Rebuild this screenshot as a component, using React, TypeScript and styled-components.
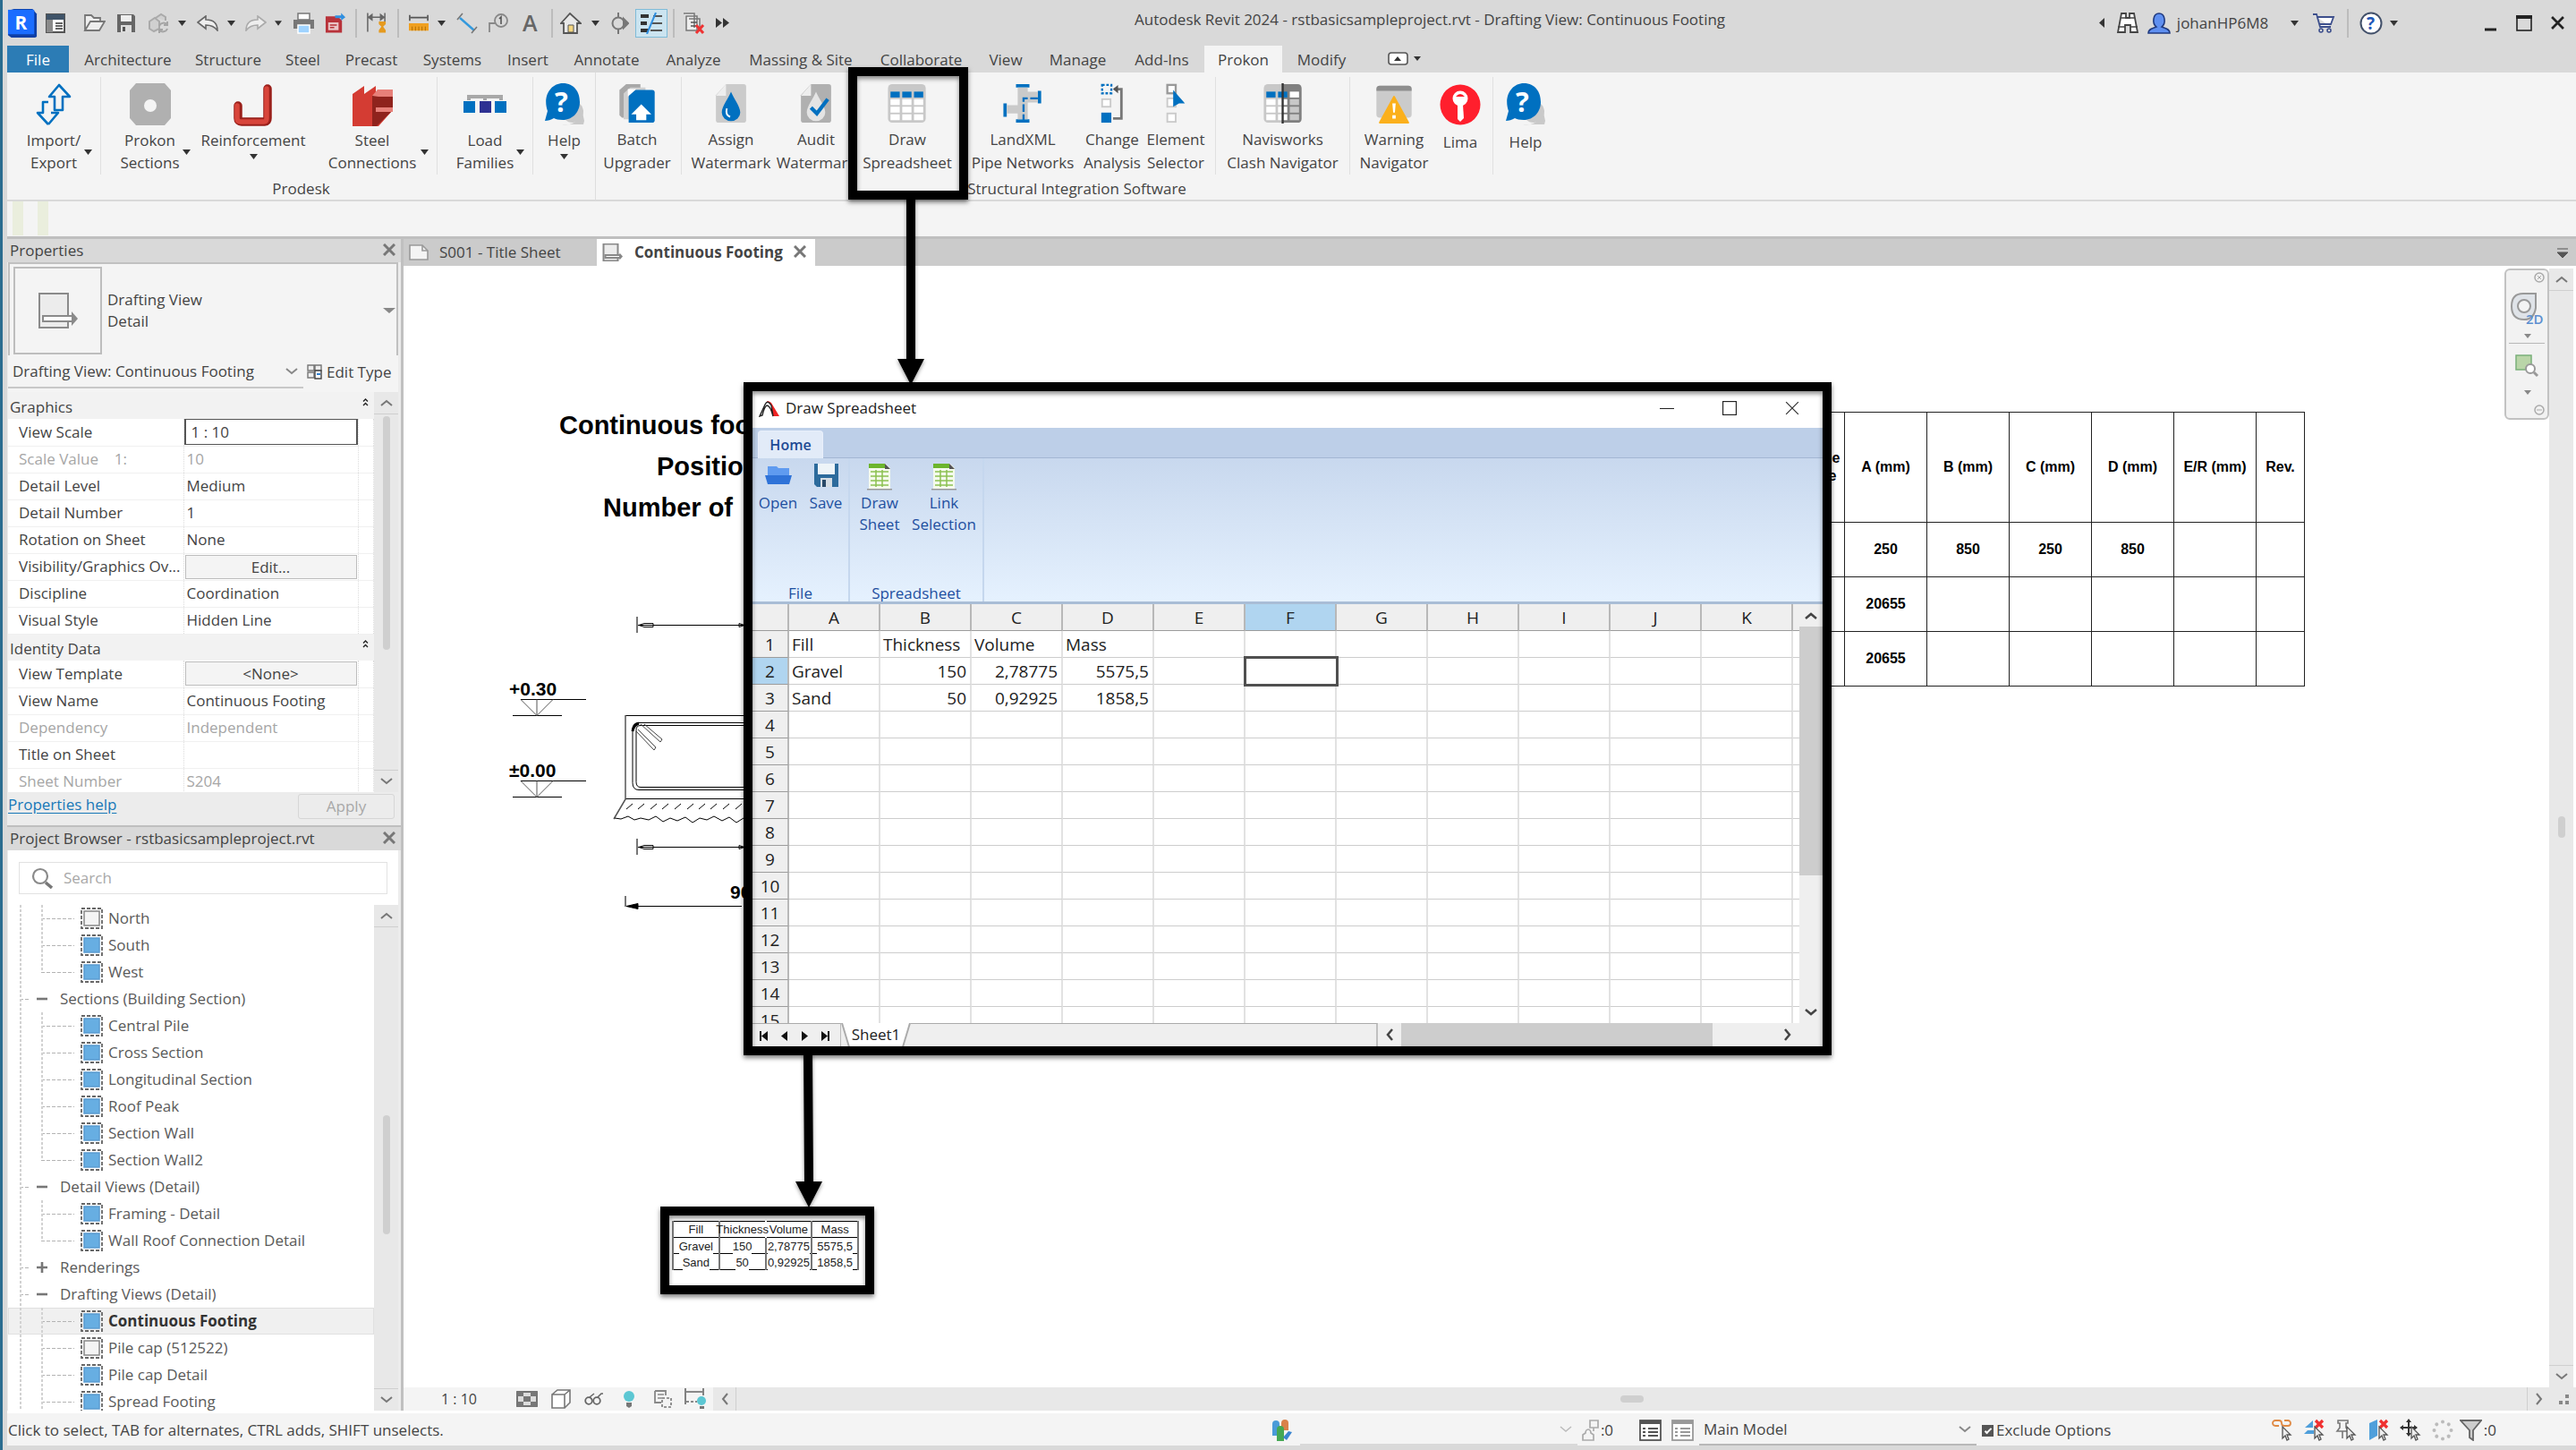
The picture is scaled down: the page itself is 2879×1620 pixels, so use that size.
import React from "react";
import styled, { createGlobalStyle, css } from "styled-components";

const ui = `"Open Sans", "Noto Sans", sans-serif`;
const drafting = `"Liberation Sans", Arial, sans-serif`;

const GlobalStyle = createGlobalStyle`
  *, *::before, *::after { box-sizing: border-box; }
  body { margin: 0; background: #d9d9d9; }
  button, input, select { font: inherit; color: inherit; margin: 0; }
  button { border: 0; padding: 0; background: none; }
`;

const Page = styled.div`
  position: relative;
  height: 100vh;
  display: flex;
  flex-direction: column;
  overflow: hidden;
  background: #d9d9d9;
  border-left: 3px solid #2b6c8f;
  padding-left: 5px;
  color: #444;
  font: 17px/24px ${ui};
`;
const Col = styled.col<{ $w?: number }>`
  width: ${(p) => (p.$w ? `${p.$w}px` : "auto")};
`;

/* ---------- title bar ---------- */
const TitleBar = styled.header`
  height: 51px;
  display: grid;
  grid-template-columns: 1260px 1fr auto;
  align-items: center;
`;
const ToolRow = styled.div`
  display: flex;
  align-items: center;
  height: 51px;
`;
const Slot = styled.button<{ $w: number }>`
  width: ${(p) => p.$w}px;
  height: 34px;
  display: flex;
  align-items: center;
  justify-content: center;
  flex: none;
`;
const Gap = styled.span<{ $w: number }>`
  width: ${(p) => p.$w}px;
  flex: none;
`;
const Rule = styled.span<{ $w: number }>`
  width: ${(p) => p.$w}px;
  height: 32px;
  flex: none;
  background: linear-gradient(#bcbcbc, #bcbcbc) center / 2px 100% no-repeat;
`;
const ActiveTool = styled.span`
  width: 36px;
  height: 32px;
  display: flex;
  align-items: center;
  justify-content: center;
  background: #cbe4f0;
  border: 1px solid #7fbbd8;
`;
const WindowTitle = styled.div`
  padding-bottom: 7px;
  white-space: nowrap;
`;

/* ---------- ribbon ---------- */
const TabBar = styled.nav`
  height: 30px;
  display: flex;
`;
const RibbonTab = styled.button<{ $w: number; $kind?: "file" | "active" }>`
  width: ${(p) => p.$w}px;
  padding-top: 2px;
  line-height: 28px;
  white-space: nowrap;
  ${(p) => p.$kind === "file" && css`background: #2c7cb5; color: #fff; margin-right: 4px;`}
  ${(p) => p.$kind === "active" && css`background: #f4f4f4;`}
`;
const Ribbon = styled.section`
  height: 144px;
  display: flex;
  background: #f4f4f4;
  border-bottom: 2px solid #d9d9d9;
`;
const RibbonGroup = styled.div`
  display: flex;
  flex-direction: column;
  border-right: 1px solid #dedede;
  &:last-child { border-right: 0; }
`;
const GroupTools = styled.div`
  display: flex;
  height: 118px;
  padding-top: 5px;
`;
const GroupTitle = styled.div`
  text-align: center;
  line-height: 24px;
`;
const Divider = styled.span<{ $w: number }>`
  width: ${(p) => p.$w}px;
  height: 109px;
  border-right: 1px solid #e0e0e0;
`;
const Big = styled.button<{ $w: number; $drop?: boolean }>`
  position: relative;
  width: ${(p) => p.$w}px;
  height: 109px;
  display: flex;
  flex-direction: column;
  align-items: center;
  gap: ${(p) => (p.$drop ? 3 : 5)}px;
  padding-top: 7px;
  line-height: ${(p) => (p.$drop ? 25 : 26)}px;
  white-space: nowrap;
`;
const SideCaret = styled.span`
  position: absolute;
  right: 9px;
  bottom: 22px;
  line-height: 0;
`;
const OptionsBar = styled.div`
  height: 42px;
  background: #f4f4f4;
  border-bottom: 3px solid #bfbfbf;
  display: flex;
  gap: 16px;
  padding-left: 6px;
`;
const Grip = styled.span`
  width: 12px;
  height: 38px;
  background: #eaeedd;
`;

/* ---------- dock ---------- */
const Work = styled.div`
  flex: 1;
  min-height: 0;
  display: flex;
`;
const Dock = styled.aside`
  width: 443px;
  flex: none;
  display: flex;
  flex-direction: column;
  border-right: 3px solid #c0c0c0;
  padding: 0 3px 0 1px;
  background: #ececec;
`;
const PanelTitle = styled.div`
  height: 26px;
  margin: 0 -3px 0 -1px;
  padding: 0 6px 0 3px;
  background: #d9d9d9;
  display: flex;
  align-items: center;
  justify-content: space-between;
`;
const TypeSelector = styled.div`
  height: 104px;
  border: 2px solid #c0c0c0;
  border-bottom: 0;
  background: #f4f4f4;
  display: flex;
  align-items: center;
  padding: 2px 1px 0 4px;
  gap: 6px;
`;
const Preview = styled.div`
  width: 99px;
  height: 98px;
  border: 2px solid #bdbdbd;
  display: flex;
  align-items: center;
  justify-content: center;
`;
const TypeName = styled.div`
  flex: 1;
`;
const InstanceBar = styled.div`
  height: 41px;
  display: flex;
  gap: 4px;
  background: #f4f4f4;
  padding-bottom: 4px;
`;
const ComboWrap = styled.label<{ $w: number; $line: string }>`
  position: relative;
  width: ${(p) => p.$w}px;
  display: flex;
  align-items: center;
  border-bottom: 2px solid ${(p) => p.$line};
  svg { position: absolute; right: 6px; pointer-events: none; }
`;
const Combo = styled.select`
  appearance: none;
  border: 0;
  background: transparent;
  width: 100%;
  padding: 0 0 0 5px;
`;
const EditType = styled.button`
  display: flex;
  align-items: center;
  gap: 5px;
  white-space: nowrap;
`;
const PropertyArea = styled.div`
  display: flex;
  height: 447px;
  flex: none;
  overflow: hidden;
`;
const PropTable = styled.table`
  width: 409px;
  border-collapse: collapse;
  table-layout: fixed;
  background: #fff;
  th, td { height: 30px; padding: 0; text-align: left; font-weight: 400; line-height: 26px; }
`;
const SectionRow = styled.tr`
  background: #f2f2f2;
  th { padding: 3px 6px 0 2px; }
  svg { float: right; margin-top: 2px; }
`;
const PropRow = styled.tr<{ $off?: boolean }>`
  border-bottom: 1px solid #f0f0f0;
  color: ${(p) => (p.$off ? "#a6a6a6" : "#444")};
  && th { padding-left: 12px; border-right: 1px dotted #dcdcdc; white-space: pre; overflow: hidden; text-overflow: ellipsis; }
  && td { padding-left: 3px; border-right: 1px dotted #dcdcdc; }
`;
const ScaleInput = styled.input`
  display: block;
  width: 194px;
  height: 29px;
  margin-left: -3px;
  border: 2px solid #555;
  border-width: 1px 2px;
  background: #fff;
  padding: 0 6px;
`;
const CellButton = styled.button`
  display: block;
  width: 192px;
  height: 27px;
  margin-left: -2px;
  border: 1px solid #bdbdbd;
  background: #f4f4f4;
  line-height: 25px;
`;
const Scroll = styled.div`
  width: 27px;
  margin-left: auto;
  background: #e8e8e8;
  display: flex;
  flex-direction: column;
  align-items: center;
`;
const ScrollEnd = styled.button<{ $at: "top" | "bottom" }>`
  width: 100%;
  height: 25px;
  display: flex;
  align-items: center;
  justify-content: center;
  flex: none;
  ${(p) => (p.$at === "top" ? "border-bottom: 1px solid #cfcfcf;" : "border-top: 1px solid #cfcfcf; margin-top: auto;")}
`;
const Thumb = styled.span<{ $before: number; $size: number }>`
  width: 8px;
  height: ${(p) => p.$size}px;
  margin-top: ${(p) => p.$before}px;
  border-radius: 4px;
  background: #cfcfcf;
`;
const PropFooter = styled.div`
  height: 39px;
  flex: none;
  display: flex;
  align-items: flex-start;
  justify-content: space-between;
  padding: 2px 4px 0 1px;
  border-bottom: 2px solid #bfbfbf;
  margin: 0 -3px 0 -1px;
  a { color: #1878b8; text-decoration: underline; text-underline-offset: 3px; }
`;
const Apply = styled.button`
  width: 108px;
  height: 28px;
  border: 1px solid #d6d6d6;
  border-radius: 3px;
  color: #a8a8a8;
  margin-right: 3px;
`;
const Browser = styled.div`
  flex: 1;
  min-height: 0;
  background: #fff;
  display: flex;
  flex-direction: column;
`;
const SearchBox = styled.label`
  height: 36px;
  margin: 13px 12px 12px;
  border: 1px solid #e2e2e2;
  display: flex;
  align-items: center;
  gap: 12px;
  padding-left: 13px;
  flex: none;
  input { border: 0; outline: 0; background: none; flex: 1; padding: 0; }
  input::placeholder { color: #a8a8a8; opacity: 1; }
`;
const TreeArea = styled.div`
  flex: 1;
  min-height: 0;
  display: flex;
  overflow: hidden;
`;
const Tree = styled.ul`
  list-style: none;
  margin: 0;
  padding: 0;
  width: 409px;
`;
const TreeRow = styled.li<{ $sel?: boolean }>`
  height: 30px;
  display: flex;
  align-items: center;
  padding-left: 13px;
  color: ${(p) => (p.$sel ? "#333" : "#5a5a5a")};
  font-weight: ${(p) => (p.$sel ? 700 : 400)};
  background: ${(p) => (p.$sel ? "#f0f0f0" : "transparent")};
  box-shadow: ${(p) => (p.$sel ? "inset 0 0 0 1px #e0e0e0" : "none")};
`;
const dots = "repeating-linear-gradient(#d2d2d2 0 3px, transparent 3px 5px)";
const dashes = "repeating-linear-gradient(90deg, #b4b4b4 0 4px, transparent 4px 6px)";
const Guide = styled.span<{ $w: number; $arm?: number; $stop?: boolean }>`
  width: ${(p) => p.$w}px;
  height: 30px;
  flex: none;
  background:
    ${dots} left top / 2px ${(p) => (p.$stop ? "50%" : "100%")} no-repeat,
    ${dashes} left center / ${(p) => p.$arm || 0}px 1px no-repeat;
`;
const TreeLabel = styled.span<{ $gap: number }>`
  padding-left: ${(p) => p.$gap}px;
  white-space: nowrap;
`;

/* ---------- canvas ---------- */
const Main = styled.main`
  flex: 1;
  min-width: 0;
  display: flex;
  flex-direction: column;
`;
const DocTabs = styled.div`
  height: 30px;
  background: #cbcbcb;
  display: flex;
  align-items: center;
`;
const DocTab = styled.div<{ $active?: boolean }>`
  height: 30px;
  display: flex;
  align-items: center;
  gap: 12px;
  width: ${(p) => (p.$active ? 244 : 216)}px;
  padding-left: 6px;
  background: ${(p) => (p.$active ? "#fff" : "transparent")};
  font-weight: ${(p) => (p.$active ? 700 : 400)};
  white-space: nowrap;
`;
const TabOptions = styled.button`
  margin-left: auto;
  padding-right: 9px;
  line-height: 0;
`;
const Canvas = styled.div`
  position: relative;
  flex: 1;
  min-height: 0;
  background: #fff;
  display: flex;
  justify-content: flex-end;
  padding: 3px 3px 0 0;
`;
const Drawing = styled.svg`
  position: absolute;
  left: 1px;
  top: 0;
`;
const Schedule = styled.table`
  position: absolute;
  left: 1552px;
  top: 163px;
  border-collapse: collapse;
  table-layout: fixed;
  width: 573px;
  color: #000;
  font: 700 16px/20px ${drafting};
  th, td { border: 1px solid #222; padding: 0; text-align: center; height: 61px; }
  thead th { height: 123px; }
`;
const NavBar = styled.div`
  width: 50px;
  height: 169px;
  border: 2px solid #c2c2c2;
  border-radius: 6px;
  background: #f2f2f2;
  display: flex;
  flex-direction: column;
  align-items: center;
  color: #999;
`;
const VScroll = styled(Scroll)`
  margin-left: 0;
`;
const ViewBar = styled.div`
  height: 26px;
  display: flex;
  align-items: center;
  background: #e8e8e8;
  font-size: 16px;
`;
const ViewTools = styled.div`
  width: 346px;
  height: 26px;
  display: flex;
  align-items: center;
  background: #f4f4f4;
  padding-left: 42px;
`;
const ScaleButton = styled.button`
  width: 64px;
  text-align: left;
`;
const HTrack = styled.div`
  flex: 1;
  height: 26px;
  border-left: 1px solid #cfcfcf;
  border-right: 1px solid #cfcfcf;
  display: flex;
  align-items: center;
  justify-content: center;
`;
const HThumb = styled.span`
  width: 26px;
  height: 8px;
  border-radius: 4px;
  background: #cfcfcf;
`;

/* ---------- status bar ---------- */
const Status = styled.footer`
  height: 44px;
  border-top: 3px solid #fff;
  border-bottom: 5px solid #d9d9d9;
  background: #f4f4f4;
  display: flex;
  align-items: center;
  padding: 2px 89px 0 0;
`;
const Hint = styled.span`
  width: 1409px;
  padding-left: 1px;
`;
const StatusCombo = styled(ComboWrap)`
  height: 34px;
`;
const Exclude = styled.label`
  display: flex;
  align-items: center;
  gap: 3px;
  padding-left: 6px;
  white-space: nowrap;
  input { appearance: none; margin: 0; width: 13px; height: 13px; background: #555; display: grid; place-items: center; }
  input:checked::after { content: ""; width: 8px; height: 4px; border: solid #fff; border-width: 0 0 2px 2px; transform: rotate(-45deg); }
`;
const StatusTools = styled.div`
  margin-left: auto;
  display: flex;
  align-items: center;
`;

/* ---------- callouts ---------- */
const Frame = styled.div<{ $x: number; $y: number; $w: number; $h: number }>`
  position: absolute;
  left: ${(p) => p.$x}px;
  top: ${(p) => p.$y}px;
  width: ${(p) => p.$w}px;
  height: ${(p) => p.$h}px;
  border: 10px solid #000;
  box-shadow: 0 3px 5px rgba(0, 0, 0, 0.5);
  &::after {
    content: "";
    position: absolute;
    inset: 0;
    box-shadow: inset 0 3px 5px rgba(0, 0, 0, 0.45);
    pointer-events: none;
  }
`;
const Arrow = styled.svg<{ $x: number; $y: number }>`
  position: absolute;
  left: ${(p) => p.$x}px;
  top: ${(p) => p.$y}px;
  filter: drop-shadow(0 2px 2px rgba(0, 0, 0, 0.4));
`;
const Window = styled.div`
  height: 100%;
  display: flex;
  flex-direction: column;
  background: #fff;
  color: #1e4fa0;
`;
const WinTitle = styled.div`
  height: 41px;
  display: flex;
  align-items: center;
  padding: 0 26px 3px 7px;
  gap: 6px;
  color: #222;
  span { flex: 1; }
`;
const WinButtons = styled.div`
  display: flex;
  gap: 54px;
  button { width: 16px; line-height: 0; }
`;
const WinTabs = styled.div`
  height: 34px;
  background: #bdcfe8;
  border-bottom: 1px solid #a3b6d3;
  padding: 3px 0 0 6px;
`;
const WinTab = styled.button`
  width: 73px;
  height: 31px;
  background: #e2ebf8;
  border: 1px solid #e8effa;
  border-bottom: 0;
  border-radius: 4px 4px 0 0;
  color: #1e4a94;
  font-weight: 600;
  font-size: 16px;
`;
const WinRibbon = styled.div`
  height: 163px;
  background: linear-gradient(#c8d8ee, #e5f1fe 158px);
  border-bottom: 3px solid #a9bdd6;
  display: flex;
  overflow: hidden;
`;
const WinGroup = styled.div<{ $w: number }>`
  width: ${(p) => p.$w}px;
  border-right: 2px solid #c5d7ee;
  display: flex;
  flex-direction: column;
  justify-content: space-between;
  text-align: center;
`;
const WinTools = styled.div`
  display: flex;
  line-height: 24px;
`;
const WinTool = styled.button<{ $w: number }>`
  width: ${(p) => p.$w}px;
  padding-top: 6px;
  display: flex;
  flex-direction: column;
  align-items: center;
  gap: 2px;
`;
const WinGroupTitle = styled.div`
  height: 22px;
  line-height: 26px;
  overflow: hidden;
`;
const SheetArea = styled.div`
  flex: 1;
  min-height: 0;
  display: flex;
  overflow: hidden;
  color: #222;
`;
const Sheet = styled.table`
  border-collapse: separate;
  border-spacing: 0;
  table-layout: fixed;
  width: 1170px;
  font-size: 19px;
  line-height: 28px;
  td, th { height: 30px; padding: 0 4px 0 3px; font-weight: 400; border-right: 2px solid #e2e2e2; border-bottom: 1px solid #cdcdcd; white-space: nowrap; overflow: hidden; }
  tr > *:last-child { border-right: 0; }
`;
const HeadCell = styled.th<{ $hot?: boolean }>`
  && {
    padding: 0;
    text-align: center;
    background: ${(p) => (p.$hot ? "#b0d5f0" : "#efefef")};
    border-color: #b8b8b8;
    border-bottom-color: #9c9c9c;
  }
`;
const Cell = styled.td<{ $num?: boolean; $cursor?: boolean }>`
  text-align: ${(p) => (p.$num ? "right" : "left")};
  ${(p) => p.$cursor && css`&& { outline: 3px solid #505050; outline-offset: -1px; border-color: transparent; }`}
`;
const SheetScroll = styled.div`
  width: 26px;
  background: #efefef;
  display: flex;
  flex-direction: column;
`;
const SheetScrollButton = styled.button`
  height: 25px;
  display: grid;
  place-items: center;
`;
const SheetThumb = styled.span`
  height: 278px;
  background: #cdcdcd;
  margin-bottom: auto;
`;
const SheetFooter = styled.div`
  height: 26px;
  background: #efefef;
  display: flex;
  align-items: stretch;
  color: #222;
`;
const SheetNav = styled.div`
  width: 99px;
  display: flex;
  justify-content: space-around;
  padding-right: 4px;
  border-top: 1px solid #aaa;
  border-right: 1px solid #bbb;
`;
const SheetTab = styled.button`
  width: 78px;
  background: #aaa;
  clip-path: polygon(0 0, 100% 0, 90% 100%, 10% 100%);
  span {
    display: block;
    height: 26px;
    line-height: 26px;
    background: #fff;
    clip-path: polygon(2px 0, calc(100% - 2px) 0, calc(90% - 2px) 100%, calc(10% + 2px) 100%);
  }
`;
const FooterFill = styled.div`
  flex: 1;
  border-top: 1px solid #aaa;
  border-right: 2px solid #c0c0c0;
`;
const SheetHScroll = styled.div`
  width: 497px;
  display: flex;
  padding-right: 26px;
  button { width: 26px; display: grid; place-items: center; }
  span { width: 348px; background: #cdcdcd; margin-right: auto; }
`;
const Placed = styled.div`
  height: 100%;
  background: #fff;
  padding: 6px 0 0 3px;
`;
const PlacedTable = styled.table`
  border-collapse: collapse;
  table-layout: fixed;
  width: 209px;
  color: #222;
  font: 13px/17px ${drafting};
  th, td { padding: 0; height: 18px; border: 2px solid #777; border-top: 1px solid #000; border-bottom: 1px solid #000; font-weight: 400; white-space: nowrap; text-align: center; }
  th:nth-child(2) { border-left-color: transparent; border-right-color: transparent; }
  td span, th span { display: flex; justify-content: center; margin: 0 -6px; }
  td b { font-weight: 400; background: #fff; margin-bottom: -2px; position: relative; }
`;

/* ---------- drawings ---------- */
const S = ({ w, h, v, children }: { w: number; h: number; v?: string; children: React.ReactNode }) => (
  <svg width={w} height={h} viewBox={v || `0 0 ${w} ${h}`} fill="none" aria-hidden="true">{children}</svg>
);
const Caret = () => <S w={9} h={6}><path d="M0 0h9L4.5 6z" fill="#333" /></S>;
const Chev = ({ d, c = "#777", s = 2 }: { d: "u" | "d" | "l" | "r"; c?: string; s?: number }) => (
  <S w={14} h={14}>
    <path stroke={c} strokeWidth={s} d={{ u: "M1 10l6-5 6 5", d: "M1 4l6 5 6-5", l: "M10 1L5 7l5 6", r: "M4 1l5 6-5 6" }[d]} />
  </S>
);
const Cross = ({ s = 14, c = "#777", k = 3 }: { s?: number; c?: string; k?: number }) => (
  <S w={s} h={s} v="0 0 14 14"><path stroke={c} strokeWidth={k} d="M1 1l12 12M13 1L1 13" /></S>
);
const RLogo = () => (
  <S w={36} h={34}>
    <path d="M2 2l6-2h22l5 6v27l-2 1H5l-4-3z" fill="#0d3fa6" /><rect x="1" y="1" width="31" height="29" fill="#1a6dff" />
    <text x="9" y="24" fontFamily="Open Sans" fontWeight="700" fontSize="22" fill="#fff">R</text>
  </S>
);
const HomeIcon = () => (
  <S w={22} h={22}><rect x="1" y="1" width="20" height="20" stroke="#555" strokeWidth="2" fill="#fff" /><path d="M1 1h20v6H1z" fill="#3f5368" /><path d="M1 7h7v14H1z" fill="#8a8a8a" /><path d="M11 11h8M11 14h8M11 17h8" stroke="#333" strokeWidth="1.5" /></S>
);
const Folder = () => <S w={25} h={22}><path d="M2 19V2h7l3 3h7v4M2 19l6-10h16l-6 10z" stroke="#777" strokeWidth="1.8" fill="#eee" /></S>;
const Disk = () => <S w={22} h={22}><path d="M1 1h18l2 2v18H1z" fill="#666" /><path d="M5 2h12v7H5z" fill="#eee" /><path d="M5 13h12v8H5z" fill="#ddd" /><path d="M7 15h3v5H7z" fill="#555" /></S>;
const Sync = () => <S w={25} h={24}><path d="M2 10l6-4 5 4v8l-6 3-5-3zM9 6l6-4 5 3v4" stroke="#aaa" strokeWidth="2" fill="#d0d0d0" /><path d="M13 15a5 5 0 019-1M22 18a5 5 0 01-9 1M22 10v4h-4M13 23v-4h4" stroke="#a5a5a5" strokeWidth="2" /></S>;
const Undo = ({ c = "#666", flip = false }: { c?: string; flip?: boolean }) => (
  <S w={25} h={18}><path transform={flip ? "matrix(-1 0 0 1 25 0)" : undefined} d="M1 8l9-7v4c8 0 13 4 13 12-3-4-6-6-13-6v4z" stroke={c} strokeWidth="1.6" fill="#eee" /></S>
);
const Printer = () => <S w={25} h={24}><path d="M6 1h13v7H6z" fill="#fff" stroke="#777" strokeWidth="1.5" /><path d="M1 8h23v10H1z" fill="#777" /><path d="M6 14h13v9H6z" fill="#9fd3ff" stroke="#fff" strokeWidth="1.5" /></S>;
const Pdf = () => <S w={25} h={24}><path d="M1 4h14l5 5v14H1z" fill="#b8323a" /><path d="M4 11h12v9H4z" fill="#eac5c7" /><path d="M6 14h8M6 17h5" stroke="#b8323a" strokeWidth="1.5" /><path d="M12 6V3h7V0l5 5-5 4V6z" fill="#2f8fe0" /></S>;
const Measure = () => <S w={25} h={24}><path d="M2 0v22M22 0v10M3 5h18M3 5l4-3v6zM21 5l-4-3v6z" stroke="#666" strokeWidth="1.6" fill="#666" /><path d="M15 10h8v3l-3 3 3 4v3h-8v-3l3-4-3-3z" fill="#e59a1f" /></S>;
const Ruler = () => <S w={24} h={20}><path d="M1 0v7M23 0v7M2 3h20" stroke="#555" strokeWidth="1.8" /><path d="M0 10h24v9H0z" fill="#f0a020" /><path d="M4 14v5M8 14v5M12 14v5M16 14v5M20 14v5" stroke="#a86a00" /></S>;
const Aligned = () => <S w={24} h={24}><path d="M4 6l16 14" stroke="#3399dd" strokeWidth="2.4" /><path d="M1 8l6-7M17 23l6-7" stroke="#777" strokeWidth="1.6" /></S>;
const Tag = () => <S w={22} h={22}><circle cx="14" cy="8" r="7" stroke="#888" strokeWidth="1.8" /><path d="M12 6l2-2v8" stroke="#555" strokeWidth="1.6" /><path d="M7 11H1v10" stroke="#888" strokeWidth="1.8" /></S>;
const LetterA = () => <S w={28} h={34}><text x="5" y="26" fontFamily="Open Sans" fontWeight="600" fontSize="25" fill="#666">A</text></S>;
const House = () => <S w={24} h={24}><path d="M1 12L11 1l12 11h-4v11H4V12z" fill="#e8e8e8" stroke="#555" strokeWidth="1.8" /><path d="M9 14h6v8H9z" fill="#f4d680" stroke="#555" /></S>;
const Section = () => <S w={22} h={24}><circle cx="10" cy="12" r="6.5" stroke="#777" strokeWidth="2" /><path d="M10 0v6M10 18v6M16 7l5 5-5 5z" stroke="#777" strokeWidth="2" fill="#777" /></S>;
const ThinLines = () => <S w={26} h={24}><path d="M1 4h9M1 12h7M1 20h9" stroke="#333" strokeWidth="4" /><path d="M15 4h10M13 12h12M12 20h13" stroke="#555" strokeWidth="1.8" /><path d="M18 0L8 24" stroke="#2f8fe0" strokeWidth="2" /></S>;
const CloseViews = () => <S w={25} h={24}><path d="M1 1h12v16M4 4h12v16H4zM7 7h12v13" stroke="#777" strokeWidth="1.5" fill="#eee" /><path d="M9 11h7M9 15h6" stroke="#555" strokeWidth="1.5" /><path d="M15 14l8 9M23 14l-8 9" stroke="#e33" strokeWidth="3" /></S>;
const More = () => <S w={16} h={11}><path d="M0 0l7 5.500L0 11zM8 0l7 5.500L8 11z" fill="#333" /></S>;
const Binoculars = () => <S w={26} h={24}><path d="M6 1h5v5h4V1h5l4 21h-8v-8h-6v8H2z" fill="#fff" stroke="#444" strokeWidth="1.8" /><path d="M2 16h8M16 16h8M6 6h5M15 6h5" stroke="#444" strokeWidth="1.5" /></S>;
const User = () => <S w={26} h={24}><path d="M1 23c0-5 5-5 9-7-5-4-4-15 3-15s8 11 3 15c4 2 9 2 9 7z" fill="#5f8ff0" stroke="#1f3a80" strokeWidth="1.6" /></S>;
const Cart = () => <S w={26} h={24}><path d="M1 2h4l4 14h12M6 5h18l-3 8H8" stroke="#3d4f8c" strokeWidth="1.8" fill="#fff" /><circle cx="10" cy="20" r="2" stroke="#3d4f8c" strokeWidth="1.6" /><circle cx="19" cy="20" r="2" stroke="#3d4f8c" strokeWidth="1.6" /></S>;
const Ask = () => <S w={26} h={26}><circle cx="13" cy="13" r="11.500" fill="#fff" stroke="#42506a" strokeWidth="2" /><text x="8" y="20" fontFamily="Open Sans" fontWeight="700" fontSize="19" fill="#2257b8">?</text></S>;

const ImportExport = () => <S w={42} h={48}><path d="M27 2L16 15h6v15h9V15h8zM15 46L3 33h6V21h6M15 46l11-13h-8" stroke="#0070c0" strokeWidth="2.600" strokeLinejoin="round" /></S>;
const Octagon = () => <S w={48} h={48}><path d="M8 0h32l7 8v31l-7 8H8l-7-8V8z" fill="#b0b0b0" /><circle cx="24" cy="25" r="7" fill="#f4f4f4" /></S>;
const Rebar = () => <S w={46} h={48}><path d="M6 25v14q0 4 4 4h26q3 0 3-4V6" stroke="#9a1f1a" strokeWidth="9.500" strokeLinecap="round" /><path d="M5 25v14q0 4 4 4h26q3 0 3-4V6" stroke="#d8453b" strokeWidth="5.500" strokeLinecap="round" /></S>;
const SteelIcon = () => <S w={46} h={48}><path d="M1 12l13-9v9l13-9v8l19-4v23L30 48H1z" fill="#d43c33" /><path d="M23 14l23-3v19L28 48h-5z" fill="#8f231d" /><path d="M23 14l6-7h17v8H30zM27 27h19v5H27z" fill="#e78079" /></S>;
const Families = () => <S w={48} h={48}><path d="M6 19v-4h36v4M24 15v4" stroke="#a8a8a8" strokeWidth="4" /><path d="M0 20h13v13H0z" fill="#0070c0" /><path d="M18 20h13v13H18z" fill="#2e3192" /><path d="M35 20h13v13H35z" fill="#0070c0" /></S>;
const HelpIcon = () => <S w={46} h={48}><path d="M20 46c14 2 22-6 22-18l3 14-1 4z" fill="#c9c9c9" /><circle cx="32" cy="32" r="12" fill="#c9c9c9" /><path d="M1 42l3-11C-2 14 8 0 21 0s19 10 19 21-8 20-19 20c-5 0-8-1-10-2-3 2-7 3-10 3z" fill="#0070c0" /><text x="12" y="32" fontFamily="Open Sans" fontWeight="700" fontSize="31" fill="#fff">?</text></S>;
const Batch = () => <S w={44} h={48}><path d="M1 8L9 1h17v40H4l-3-3z" fill="#a8a8a8" /><path d="M6 12l8-7h18v38H6z" fill="#d0d0d0" /><path d="M12 14l8-6h20q3 0 3 3v33q0 3-3 3H12z" fill="#0070c0" /><path d="M11 16V7h10z" fill="#fff" /><path d="M27 25l12 12h-6v7H21v-7h-6z" fill="#fff" /></S>;
const Water = ({ audit }: { audit?: boolean }) => (
  <S w={38} h={48}><path d="M1 14L13 1h21q3 0 3 3v40q0 3-3 3H4q-3 0-3-3z" fill={audit ? "#b0b0b0" : "#cbcbcb"} /><path d="M1 15L13 1v14z" fill="#eee" />
    <path d="M19 10c3 8 11 17 11 25a11 10 0 01-22 0c0-8 8-17 11-25z" fill={audit ? "#e4e4e4" : "#0070c0"} />
    {audit ? <path d="M13 29l7 7 13-17" stroke="#0070c0" strokeWidth="4.500" /> : <path d="M14 30q-2 8 4 10" stroke="#fff" strokeWidth="2" />}
  </S>
);
const Grid = ({ half }: { half?: boolean }) => (
  <S w={46} h={48}><rect x="0" y="1" width="45" height="46" rx="5" fill="#c8c8c8" />
    {half && <path d="M23 1h17q5 0 5 5v36q0 5-5 5H23z" fill="#808080" />}
    {[0, 1, 2].map((c) => [0, 1, 2, 3].map((r) => (
      <rect key={`${c}${r}`} x={3 + c * 14} y={10 + r * 9} width="11" height="7" fill={r === 0 && !(half && c === 2) ? "#0070c0" : half && c === 2 && r > 0 ? "#c8c8c8" : "#fff"} />
    )))}
    {half && <path d="M22.500 0v48" stroke="#333" strokeWidth="2.500" />}
  </S>
);
const Pipes = () => <S w={46} h={48}><path d="M15 1h16v4H15zM15 43h16v4H15zM0 24h4v16H0zM41 9h4v15h-4z" fill="#0070c0" /><path d="M17 5h12v5h12v13H29v20H17v-7H4V26h13z" fill="#cacaca" /><path d="M24 46V18h18" stroke="#0070c0" strokeWidth="2.500" strokeDasharray="9 3" /></S>;
const Change = () => <S w={28} h={48}><rect x="2" y="2" width="11" height="10" stroke="#0070c0" strokeWidth="2.500" strokeDasharray="3 2" /><rect x="2" y="19" width="10" height="9" stroke="#cacaca" strokeWidth="2" fill="#fff" /><path d="M1 35h12v12H1z" fill="#0070c0" /><path d="M16 7h9v35H15" stroke="#777" strokeWidth="3" /><path d="M15 7l6-5v10z" fill="#555" /></S>;
const Element = () => <S w={24} h={48}><rect x="2" y="2" width="10" height="10" stroke="#999" strokeWidth="2.500" fill="#fff" /><rect x="2" y="18" width="10" height="10" stroke="#cacaca" strokeWidth="2" fill="#fff" /><rect x="2" y="36" width="10" height="10" stroke="#cacaca" strokeWidth="2" fill="#fff" /><path d="M9 8l14 16-7 0-7 4z" fill="#0070c0" /></S>;
const Warn = () => <S w={44} h={48}><rect x="1" y="3" width="42" height="38" rx="4" fill="#cbcbcb" /><path d="M1 9V7q0-4 4-4h34q4 0 4 4v2z" fill="#8e8e8e" /><path d="M22 16l17 31H5z" fill="#fbb01c" strokeLinejoin="round" stroke="#fbb01c" strokeWidth="2" /><path d="M20 24h4l-1 11h-2zM20 38h4v4h-4z" fill="#fff" /></S>;
const Key = () => <S w={46} h={48}><circle cx="23" cy="24" r="22.500" fill="#ff1f2d" /><circle cx="23" cy="17" r="8.500" fill="#fff" /><path d="M20 24h6l1 15-4 4-3-3z" fill="#fff" /><path d="M18 15q5-6 10 0z" fill="#ff1f2d" /></S>;

const ViewGlyph = ({ w = 46, h = 40, c = "#8a8a8a", k = 2 }: { w?: number; h?: number; c?: string; k?: number }) => (
  <S w={w} h={h} v="0 0 46 40"><path d="M2 1h32v38H2z" stroke={c} strokeWidth={k} fill="#ececec" /><path d="M6 26h33v6H6z" fill="#fff" stroke={c} strokeWidth={k} /><path d="M38 21l7 8-7 8z" fill={c} /></S>
);
const EditTypeIcon = () => <S w={17} h={17}><path d="M1 1h7v6H1zM9 1h7v6H9zM1 9h7v6H1z" stroke="#777" strokeWidth="1.4" fill="#eee" /><path d="M9 7h7v9H9z" fill="#fff" stroke="#444" strokeWidth="1.4" /><path d="M11 11h4" stroke="#2f7fd0" strokeWidth="2" /></S>;
const Collapse = () => <S w={7} h={10}><path d="M1 4.500L3.500 2 6 4.500M1 9l2.500-2.500L6 9" stroke="#222" strokeWidth="1.400" /></S>;
const Lens = () => <S w={24} h={24}><circle cx="10" cy="10" r="8" stroke="#8a8a8a" strokeWidth="2.200" /><path d="M16 17l7 6" stroke="#777" strokeWidth="3.500" /></S>;
const Leaf = ({ empty }: { empty?: boolean }) => (
  <S w={25} h={24}><rect x="1" y="1" width="23" height="22" stroke="#666" strokeWidth="1.800" strokeDasharray="4 2" /><rect x="4" y="4" width="17" height="16" fill={empty ? "#f4f4f4" : "#67aee2"} stroke={empty ? "#888" : "#5a9bd0"} strokeWidth="1.500" /></S>
);
const Toggle = ({ plus }: { plus?: boolean }) => <S w={12} h={12}><path d={plus ? "M0 6h12M6 0v12" : "M0 6h12"} stroke="#777" strokeWidth="2.600" /></S>;
const Sheetpage = () => <S w={22} h={20}><path d="M1 2h14l6 6v10H1z" stroke="#999" strokeWidth="1.600" fill="#f4f4f4" /><path d="M15 2v6h6" stroke="#999" strokeWidth="1.600" /></S>;

const Cursor = "M0 0v13l3-3 2 5 2-1-2-5h4z";
const Pick = ({ children }: { children: React.ReactNode }) => (
  <S w={24} h={26}>{children}<path d={Cursor} transform="translate(13 9)" fill="#eee" stroke="#555" strokeWidth="1.300" /></S>
);
const RedX = () => <path d="M14 2l8 8M22 2l-8 8" stroke="#f03030" strokeWidth="3.200" />;
const ListIcon = ({ c = "#555" }: { c?: string }) => <S w={25} h={24}><rect x="1" y="1" width="23" height="22" stroke={c} strokeWidth="1.800" fill="#fff" /><path d="M1 1h23v4H1z" fill={c} /><path d="M4 10h3M4 14h3M4 18h3M10 10h11M10 14h11M10 18h11" stroke={c} strokeWidth="1.800" /></S>;
const People = ({ c = "#aaa" }: { c?: string }) => <S w={20} h={24}><path d="M1 23v-6l3-2a3 4 0 116 0l3 2v6zM9 1h9v8H9zM13 9v4" stroke={c} strokeWidth="1.700" /></S>;
const Figures = () => <S w={25} h={25}><path d="M2 5a4 4 0 018 0v13H2z" fill="#4a9bd8" /><path d="M12 4a4 4 0 018 0v8h-8z" fill="#d9814a" /><path d="M7 11a4 4 0 018 0v13H7z" fill="#45a854" /><path d="M14 20l6-7 4 1-6 9z" fill="#3a86d0" /></S>;

const Checker = () => <S w={24} h={18}><rect x="1" y="1" width="22" height="16" fill="#ddd" stroke="#666" strokeWidth="1.800" /><path d="M1 1h7v5H1zM16 1h7v5h-7zM8 6h8v6H8zM1 12h7v5H1zM16 12h7v5h-7z" fill="#777" /></S>;
const Cube = () => <S w={22} h={22}><path d="M1 6h14v15H1zM1 6l6-5h14v14l-6 6M15 6l6-5" stroke="#777" strokeWidth="1.600" fill="#fff" /></S>;
const Glasses = () => <S w={22} h={14}><circle cx="5" cy="9" r="3.800" stroke="#666" strokeWidth="1.800" /><circle cx="14" cy="9" r="3.800" stroke="#666" strokeWidth="1.800" /><path d="M6 5l5-4M15 5l4-4h2" stroke="#666" strokeWidth="1.600" /></S>;
const Bulb = () => <S w={14} h={20}><circle cx="7" cy="7" r="6" fill="#5cc7d3" /><path d="M4 14h6v4l-3 2-3-2z" fill="#777" /></S>;
const Crop = () => <S w={20} h={20}><path d="M1 1h12v5M1 1v13h7" stroke="#888" strokeWidth="1.800" /><path d="M4 5h7M4 9h5" stroke="#888" strokeWidth="1.500" /><path d="M9 9h10v10H9z" stroke="#777" strokeWidth="1.600" strokeDasharray="3 2" /></S>;
const Reveal = () => <S w={26} h={24}><path d="M1 0v18M21 0v8M2 4h18" stroke="#666" strokeWidth="1.600" /><path d="M2 15h12" stroke="#666" strokeWidth="1.600" strokeDasharray="3 2" /><circle cx="19" cy="14" r="5" fill="#5cc7d3" /><path d="M17 20h5v3h-5z" fill="#777" /></S>;

const Prokon = () => <S w={24} h={19}><path d="M9 1q3 0 5 2l9 15h-7L10 3z" fill="#e22" /><path d="M1 18L7 5q3-6 7 1l2 12Q13 6 9 6 6 8 4 17z" fill="#fff" stroke="#222" strokeWidth="1.400" /></S>;
const BlueFolder = () => <S w={30} h={30}><path d="M3 3h10l2 2h12v14H3z" fill="#5f9bf0" /><path d="M0 13h30l-3 10H3z" fill="#2f73d8" /></S>;
const BlueDisk = () => <S w={27} h={30}><path d="M0 0h27v26H3l-3-3z" fill="#2d6b9c" /><path d="M4 0h19v12H4z" fill="#eef4f8" /><path d="M7 16h13v10H7z" fill="#d5dde4" /><path d="M9 18h4v8H9z" fill="#2a4a68" /></S>;
const GreenSheet = () => (
  <S w={28} h={30}><path d="M2 0h19l5 5v23H2z" fill="#f4faec" /><path d="M2 0h18v5H2z" fill="#6cb52d" /><path d="M20 0l6 6h-6z" fill="#555" />
    <path d="M4 9h20M4 14h20M4 19h20M4 24h20M10 7v19M17 7v19" stroke="#8cc152" strokeWidth="1.500" /><path d="M0 28h28v1.500H0z" fill="#999" /></S>
);

const tabs: [string, number][] = [
  ["Architecture", 124], ["Structure", 100], ["Steel", 67], ["Precast", 86], ["Systems", 95], ["Insert", 74], ["Annotate", 102], ["Analyze", 92],
  ["Massing & Site", 148], ["Collaborate", 121], ["View", 68], ["Manage", 93], ["Add-Ins", 95], ["Prokon", 87], ["Modify", 88],
];

type Tool = { l: string[]; i: React.ReactNode; w: number; sep?: number; caret?: "side" | "below" };
const prodesk: Tool[] = [
  { l: ["Import/", "Export"], i: <ImportExport />, w: 104, sep: 1, caret: "side" },
  { l: ["Prokon", "Sections"], i: <Octagon />, w: 109, caret: "side" },
  { l: ["Reinforcement"], i: <Rebar />, w: 122, caret: "below" },
  { l: ["Steel", "Connections"], i: <SteelIcon />, w: 144, sep: 1, caret: "side" },
  { l: ["Load", "Families"], i: <Families />, w: 106, sep: 1, caret: "side" },
  { l: ["Help"], i: <HelpIcon />, w: 69, caret: "below" },
];
const integration: Tool[] = [
  { l: ["Batch", "Upgrader"], i: <Batch />, w: 92, sep: 4 },
  { l: ["Assign", "Watermark"], i: <Water />, w: 110 },
  { l: ["Audit", "Watermark"], i: <Water audit />, w: 80 },
  { l: ["Draw", "Spreadsheet"], i: <Grid />, w: 124 },
  { l: ["LandXML", "Pipe Networks"], i: <Pipes />, w: 134 },
  { l: ["Change", "Analysis"], i: <Change />, w: 66 },
  { l: ["Element", "Selector"], i: <Element />, w: 76, sep: 7 },
  { l: ["Navisworks", "Clash Navigator"], i: <Grid half />, w: 149, sep: 1 },
  { l: ["Warning", "Navigator"], i: <Warn />, w: 98 },
  { l: ["Lima"], i: <Key />, w: 50, sep: 12 },
  { l: ["Help"], i: <HelpIcon />, w: 72 },
];

const Tools = ({ list, drop }: { list: Tool[]; drop?: boolean }) => (
  <GroupTools>
    {list.map((t, n) => (
      <React.Fragment key={n}>
        <Big $w={t.w} $drop={drop}>
          {t.i}
          <span>{t.l.map((x, k) => <React.Fragment key={k}>{k > 0 && <br />}{x}</React.Fragment>)}</span>
          {t.caret === "side" && <SideCaret><Caret /></SideCaret>}
          {t.caret === "below" && <Caret />}
        </Big>
        {t.sep && <Divider $w={t.sep} />}
      </React.Fragment>
    ))}
  </GroupTools>
);

type Prop = { n: string; v?: string; off?: boolean; btn?: boolean; input?: boolean };
const graphics: Prop[] = [
  { n: "View Scale", v: "1 : 10", input: true },
  { n: "Scale Value    1:", v: "10", off: true },
  { n: "Detail Level", v: "Medium" },
  { n: "Detail Number", v: "1" },
  { n: "Rotation on Sheet", v: "None" },
  { n: "Visibility/Graphics Ov...", v: "Edit...", btn: true },
  { n: "Discipline", v: "Coordination" },
  { n: "Visual Style", v: "Hidden Line" },
];
const identity: Prop[] = [
  { n: "View Template", v: "<None>", btn: true },
  { n: "View Name", v: "Continuous Footing" },
  { n: "Dependency", v: "Independent", off: true },
  { n: "Title on Sheet" },
  { n: "Sheet Number", v: "S204", off: true },
];
const PropRows = ({ rows }: { rows: Prop[] }) => (
  <>
    {rows.map((p) => (
      <PropRow key={p.n} $off={p.off}>
        <th scope="row">{p.n}</th>
        <td>{p.input ? <ScaleInput aria-label={p.n} defaultValue={p.v} /> : p.btn ? <CellButton>{p.v}</CellButton> : p.v}</td>
        <td />
      </PropRow>
    ))}
  </>
);

type Node = { t: string; cat?: "-" | "+"; empty?: boolean; last?: boolean; sel?: boolean };
const nodes: Node[] = [
  { t: "North", empty: true }, { t: "South" }, { t: "West", last: true },
  { t: "Sections (Building Section)", cat: "-" },
  { t: "Central Pile" }, { t: "Cross Section" }, { t: "Longitudinal Section" }, { t: "Roof Peak" }, { t: "Section Wall" }, { t: "Section Wall2", last: true },
  { t: "Detail Views (Detail)", cat: "-" },
  { t: "Framing - Detail" }, { t: "Wall Roof Connection Detail", last: true },
  { t: "Renderings", cat: "+" },
  { t: "Drafting Views (Detail)", cat: "-" },
  { t: "Continuous Footing", sel: true }, { t: "Pile cap (512522)", empty: true }, { t: "Pile cap Detail" }, { t: "Spread Footing" },
];

const cols = ["A", "B", "C", "D", "E", "F", "G", "H", "I", "J", "K", ""];
const data: string[][] = [["Fill", "Thickness", "Volume", "Mass"], ["Gravel", "150", "2,78775", "5575,5"], ["Sand", "50", "0,92925", "1858,5"]];

const Level = ({ y, t }: { y: number; t: string }) => (
  <g>
    <text x="117" y={y - 5} fontSize="21">{t}</text>
    <path d={`M130 ${y}h73M121 ${y + 18}h55`} stroke="#000" />
    <path d={`M130 ${y}l18 18 18-18M148 ${y}v18`} stroke="#555" fill="none" />
  </g>
);

const FootingDrawing = () => (
  <Drawing width="390" height="740" viewBox="0 0 390 740" fontFamily="Liberation Sans, Arial, sans-serif" fontWeight="700" fill="#000">
    <text x="173" y="188" fontSize="29">Continuous foo</text>
    <text x="282" y="234" fontSize="29">Position</text>
    <text x="222" y="280" fontSize="29">Number of</text>
    <Level y={484.5} t="+0.30" />
    <Level y={575.5} t="±0.00" />
    <g stroke="#000" fill="none">
      <path d="M260 401.500h130M260 649.500h130M247 715.500h130" />
      <path d="M260 392v18M260 640v18M247 704v12" stroke="#777" strokeWidth="2" />
      <path d="M262 401.500l6-2h10v4h-10zM262 649.500l6-2h10v4h-10zM380 401.500l-6-2v4zM380 649.500l-6-2v4z" />
      <path d="M248 715.500l13-3v6z" fill="#000" />
      <path d="M390 502.500H247M247 595.500h143" />
      <path d="M247 502v94l-13 22" stroke="#555" strokeWidth="1.500" />
      <path d="M390 510.500H262q-7 0-7 7v60q0 8 7 8h128M390 513.500H264q-5 0-5 5v58q0 6 5 6h126" />
      <path d="M262 511q-6 2-7 9" strokeWidth="3" />
      <path d="M264 512l22 20 2-3-20-17M259 520l20 21 2-3-20-20" stroke="#444" />
      <path d="M235 617l7 1 8-3 7 4 7-2 9 2 8-4 8 6 8-4 8 3 9-4 8 6 8-5 8 2 8-4 9 5 8-4 8 6 8-5 10 4" />
      <path d="M248 607l7-6M261 607l7-6M275 607l7-6M288 607l7-6M302 607l7-6M316 607l7-6M329 607l7-6M342 607l7-6M356 607l7-6M370 607l7-6" />
    </g>
    <text x="364" y="707" fontSize="21">90</text>
  </Drawing>
);

export default function App() {
  return (
    <>
      <GlobalStyle />
      <Page>
        <TitleBar>
          <ToolRow>
            <Slot $w={34} aria-label="Application menu"><RLogo /></Slot>
            <Slot $w={40} aria-label="Home"><HomeIcon /></Slot>
            <Gap $w={5} />
            <Slot $w={36} aria-label="Open"><Folder /></Slot>
            <Slot $w={36} aria-label="Save"><Disk /></Slot>
            <Slot $w={36} aria-label="Synchronize"><Sync /></Slot>
            <Slot $w={16} aria-label="Synchronize options"><Caret /></Slot>
            <Slot $w={42} aria-label="Undo"><Undo /></Slot>
            <Slot $w={10} aria-label="Undo list"><Caret /></Slot>
            <Slot $w={44} aria-label="Redo"><Undo flip c="#aaa" /></Slot>
            <Slot $w={8} aria-label="Redo list"><Caret /></Slot>
            <Slot $w={48} aria-label="Print"><Printer /></Slot>
            <Slot $w={24} aria-label="Export PDF"><Pdf /></Slot>
            <Rule $w={22} />
            <Slot $w={24} aria-label="Constraints"><Measure /></Slot>
            <Rule $w={24} />
            <Slot $w={22} aria-label="Measure"><Ruler /></Slot>
            <Slot $w={29} aria-label="Measure options"><Caret /></Slot>
            <Slot $w={28} aria-label="Aligned dimension"><Aligned /></Slot>
            <Slot $w={42} aria-label="Tag"><Tag /></Slot>
            <Slot $w={30} aria-label="Text"><LetterA /></Slot>
            <Rule $w={18} />
            <Slot $w={24} aria-label="3D view"><House /></Slot>
            <Slot $w={30} aria-label="3D view options"><Caret /></Slot>
            <Slot $w={24} aria-label="Section"><Section /></Slot>
            <Slot $w={48} aria-label="Thin lines"><ActiveTool><ThinLines /></ActiveTool></Slot>
            <Rule $w={2} />
            <Slot $w={42} aria-label="Close inactive views"><CloseViews /></Slot>
            <Slot $w={24} aria-label="More"><More /></Slot>
          </ToolRow>
          <WindowTitle>Autodesk Revit 2024 - rstbasicsampleproject.rvt - Drafting View: Continuous Footing</WindowTitle>
          <ToolRow>
            <Slot $w={15} aria-label="Collapse search"><S w={6} h={11}><path d="M6 0v11L0 5.500z" fill="#333" /></S></Slot>
            <Slot $w={43} aria-label="Search"><Binoculars /></Slot>
            <Slot $w={28} aria-label="Account"><User /></Slot>
            <Slot $w={114} as="span">johanHP6M8</Slot>
            <Gap $w={15} />
            <Slot $w={16} aria-label="Account options"><Caret /></Slot>
            <Slot $w={50} aria-label="Store"><Cart /></Slot>
            <Rule $w={4} />
            <Gap $w={10} />
            <Slot $w={28} aria-label="Help"><Ask /></Slot>
            <Slot $w={22} aria-label="Help options"><Caret /></Slot>
            <Gap $w={83} />
            <Slot $w={28} aria-label="Minimize"><S w={13} h={18}><path d="M0 16h13" stroke="#222" strokeWidth="3" /></S></Slot>
            <Slot $w={48} aria-label="Maximize"><S w={18} h={18}><rect x="1" y="1" width="16" height="16" stroke="#222" strokeWidth="1.600" /><path d="M0 2h18" stroke="#222" strokeWidth="4" /></S></Slot>
            <Slot $w={26} aria-label="Close"><Cross s={15} c="#222" k={2.5} /></Slot>
            <Gap $w={8} />
          </ToolRow>
        </TitleBar>

        <TabBar>
          <RibbonTab $w={69} $kind="file">File</RibbonTab>
          {tabs.map(([t, w]) => <RibbonTab key={t} $w={w} $kind={t === "Prokon" ? "active" : undefined}>{t}</RibbonTab>)}
          <RibbonTab $w={98} aria-label="Ribbon display"><S w={38} h={15}><rect x="1" y="1" width="21" height="13" rx="3" stroke="#555" strokeWidth="1.600" fill="#fff" /><path d="M7 10l4-5 4 5zM29 5h8l-4 5z" fill="#333" /></S></RibbonTab>
        </TabBar>
        <Ribbon>
          <RibbonGroup><Tools list={prodesk} drop /><GroupTitle>Prodesk</GroupTitle></RibbonGroup>
          <RibbonGroup><Tools list={integration} /><GroupTitle>Structural Integration Software</GroupTitle></RibbonGroup>
        </Ribbon>
        <OptionsBar><Grip /><Grip /></OptionsBar>

        <Work>
          <Dock>
            <PanelTitle>Properties<button aria-label="Close properties"><Cross /></button></PanelTitle>
            <TypeSelector>
              <Preview><ViewGlyph /></Preview>
              <TypeName>Drafting View<br />Detail</TypeName>
              <S w={14} h={6}><path d="M0 0h14L7 6z" fill="#888" /></S>
            </TypeSelector>
            <InstanceBar>
              <ComboWrap $w={330} $line="#c8c8c8">
                <Combo aria-label="Instance"><option>Drafting View: Continuous Footing</option></Combo>
                <Chev d="d" c="#888" />
              </ComboWrap>
              <EditType><EditTypeIcon />Edit Type</EditType>
            </InstanceBar>
            <PropertyArea>
              <PropTable>
                <colgroup><Col $w={196} /><Col $w={195} /><Col /></colgroup>
                <tbody>
                  <SectionRow><th colSpan={3}>Graphics<Collapse /></th></SectionRow>
                  <PropRows rows={graphics} />
                  <SectionRow><th colSpan={3}>Identity Data<Collapse /></th></SectionRow>
                  <PropRows rows={identity} />
                </tbody>
              </PropTable>
              <Scroll><ScrollEnd $at="top" aria-label="Scroll up"><Chev d="u" /></ScrollEnd><Thumb $before={2} $size={261} /><ScrollEnd $at="bottom" aria-label="Scroll down"><Chev d="d" /></ScrollEnd></Scroll>
            </PropertyArea>
            <PropFooter><a href="#help">Properties help</a><Apply>Apply</Apply></PropFooter>
            <PanelTitle>Project Browser - rstbasicsampleproject.rvt<button aria-label="Close browser"><Cross /></button></PanelTitle>
            <Browser>
              <SearchBox><Lens /><input aria-label="Search" placeholder="Search" /></SearchBox>
              <TreeArea>
                <Tree>
                  {nodes.map((n) => n.cat ? (
                    <TreeRow key={n.t}><Guide $w={19} $arm={12} /><Toggle plus={n.cat === "+"} /><TreeLabel $gap={14}>{n.t}</TreeLabel></TreeRow>
                  ) : (
                    <TreeRow key={n.t} $sel={n.sel}><Guide $w={24} /><Guide $w={44} $arm={37} $stop={n.last} /><Leaf empty={n.empty} /><TreeLabel $gap={6}>{n.t}</TreeLabel></TreeRow>
                  ))}
                </Tree>
                <Scroll><ScrollEnd $at="top" aria-label="Scroll up"><Chev d="u" /></ScrollEnd><Thumb $before={210} $size={133} /><ScrollEnd $at="bottom" aria-label="Scroll down"><Chev d="d" /></ScrollEnd></Scroll>
              </TreeArea>
            </Browser>
          </Dock>

          <Main>
            <DocTabs>
              <DocTab><Sheetpage />S001 - Title Sheet</DocTab>
              <DocTab $active><ViewGlyph w={24} h={20} k={4} c="#888" />Continuous Footing<button aria-label="Close view"><Cross /></button></DocTab>
              <TabOptions aria-label="View list"><S w={12} h={11}><path d="M0 1h12M0 5h12L6 11z" fill="#555" stroke="#555" /></S></TabOptions>
            </DocTabs>
            <Canvas>
              <FootingDrawing />
              <Schedule>
                <colgroup><Col $w={58} /><Col $w={92} /><Col $w={92} /><Col $w={92} /><Col $w={92} /><Col $w={92} /><Col /></colgroup>
                <thead><tr><th>Shape Code</th><th>A (mm)</th><th>B (mm)</th><th>C (mm)</th><th>D (mm)</th><th>E/R (mm)</th><th>Rev.</th></tr></thead>
                <tbody>
                  <tr><td /><td>250</td><td>850</td><td>250</td><td>850</td><td /><td /></tr>
                  <tr><td /><td>20655</td><td /><td /><td /><td /><td /></tr>
                  <tr><td /><td>20655</td><td /><td /><td /><td /><td /></tr>
                </tbody>
              </Schedule>
              <NavBar>
                <S w={46} h={164}>
                  <circle cx="37" cy="8" r="5" stroke="#aaa" strokeWidth="1.500" /><path d="M35 6l4 4M39 6l-4 4" stroke="#aaa" />
                  <path d="M33 28v14q-2 13-13 13-14 0-14-15 0-14 13-14h14z" fill="#dfe3e8" stroke="#999" strokeWidth="2" /><circle cx="20" cy="40" r="7" fill="#f4f4f4" stroke="#999" strokeWidth="2" />
                  <text x="22" y="60" fontSize="15" fontFamily="Open Sans" fontWeight="600" fill="#5b8fd0">2D</text>
                  <path d="M20 71h8l-4 5zM20 134h8l-4 5z" fill="#888" /><path d="M3 81.500h40" stroke="#b8b8b8" />
                  <path d="M11 95h17v16H11z" fill="#b9d5a8" stroke="#7ab07a" strokeWidth="1.500" /><circle cx="27" cy="110" r="5" fill="#fff" stroke="#999" strokeWidth="2" /><path d="M31 114l4 4" stroke="#999" strokeWidth="3" />
                  <circle cx="37" cy="156" r="5" stroke="#aaa" strokeWidth="1.500" /><path d="M34 156h6" stroke="#aaa" />
                </S>
              </NavBar>
              <VScroll><ScrollEnd $at="top" aria-label="Scroll up"><Chev d="u" /></ScrollEnd><Thumb $before={587} $size={24} /><ScrollEnd $at="bottom" aria-label="Scroll down"><Chev d="d" /></ScrollEnd></VScroll>
            </Canvas>
            <ViewBar>
              <ViewTools>
                <ScaleButton>1 : 10</ScaleButton>
                <Gap $w={11} />
                <Slot $w={42} aria-label="Detail level"><Checker /></Slot>
                <Slot $w={34} aria-label="Visual style"><Cube /></Slot>
                <Slot $w={40} aria-label="Sun path"><Glasses /></Slot>
                <Slot $w={38} aria-label="Hide or isolate"><Bulb /></Slot>
                <Slot $w={38} aria-label="Crop view"><Crop /></Slot>
                <Slot $w={36} aria-label="Reveal constraints"><Reveal /></Slot>
              </ViewTools>
              <Slot $w={25} aria-label="Scroll left"><Chev d="l" /></Slot>
              <HTrack><HThumb /></HTrack>
              <Slot $w={25} aria-label="Scroll right"><Chev d="r" /></Slot>
              <Slot $w={29} as="span"><S w={12} h={12}><path d="M1 8h4v4H1zM8 8h4v4H8zM8 1h4v4H8z" fill="#888" /></S></Slot>
            </ViewBar>
          </Main>
        </Work>

        <Status>
          <Hint>Click to select, TAB for alternates, CTRL adds, SHIFT unselects.</Hint>
          <Slot $w={30} aria-label="Worksets"><Figures /></Slot>
          <Gap $w={6} />
          <StatusCombo $w={310} $line="#d9d9d9"><Combo aria-label="Active workset" /><Chev d="d" c="#bbb" s={1.5} /></StatusCombo>
          <Gap $w={4} />
          <Slot $w={22} aria-label="Editing requests"><People /></Slot>
          <Slot $w={14} as="span">:0</Slot>
          <Gap $w={24} />
          <Slot $w={34} aria-label="Design options"><ListIcon /></Slot>
          <Slot $w={38} aria-label="Add to set"><ListIcon c="#999" /></Slot>
          <StatusCombo $w={310} $line="#b8b8b8"><Combo aria-label="Design option"><option>Main Model</option></Combo><Chev d="d" c="#888" /></StatusCombo>
          <Exclude><input type="checkbox" defaultChecked />Exclude Options</Exclude>
          <StatusTools>
            <Slot $w={36} aria-label="Select links"><Pick><path d="M9 8H5a3 3 0 010-6h4q3 0 3 3t3 3h4a3 3 0 000-6h-4" stroke="#e08a45" strokeWidth="1.800" /></Pick></Slot>
            <Slot $w={36} aria-label="Select underlay"><Pick><path d="M2 10l9-8v8zM1 17l4-4h7v4z" fill="#4f9fdb" /><RedX /></Pick></Slot>
            <Slot $w={36} aria-label="Select pinned"><Pick><path d="M3 2h11v3h-2v5l3 4H2l3-4V5H3zM8 14v8" stroke="#777" strokeWidth="1.600" /></Pick></Slot>
            <Slot $w={36} aria-label="Select by face"><Pick><path d="M2 5l9-4v18l-9 5z" fill="#4f9fdb" /><RedX /></Pick></Slot>
            <Slot $w={36} aria-label="Drag on selection"><Pick><path d="M10 1v18M1 10h18" stroke="#333" strokeWidth="2" /><path d="M10 0l3 4H7zM10 20l3-4H7zM0 10l4-3v6zM20 10l-4-3v6z" fill="#333" /></Pick></Slot>
            <Slot $w={36} aria-label="Background processes"><S w={24} h={24}>{[0, 45, 90, 135, 180, 225, 270, 315].map((a) => <circle key={a} cx="12" cy="2.500" r="2" fill="#bbb" transform={`rotate(${a} 12 12)`} />)}</S></Slot>
            <Slot $w={28} aria-label="Filter"><S w={25} h={24}><path d="M1 1h23l-9 11v11l-4-3v-8z" fill="#ccc" stroke="#666" strokeWidth="1.800" /></S></Slot>
            <span>:0</span>
          </StatusTools>
        </Status>

        <Frame $x={945} $y={75} $w={134} $h={148} />
        <Arrow $x={1000} $y={219} width="30" height="212" viewBox="0 0 30 212"><path d="M10 0h10v182h10l-15 29L0 182h10z" /></Arrow>
        <Arrow $x={886} $y={1175} width="30" height="176" viewBox="0 0 30 176"><path d="M9 0h10l1 145h10l-15 29L0 145h10z" /></Arrow>

        <Frame $x={828} $y={427} $w={1216} $h={752}>
          <Window>
            <WinTitle>
              <Prokon /><span>Draw Spreadsheet</span>
              <WinButtons>
                <button aria-label="Minimize window"><S w={16} h={16}><path d="M0 8.500h16" stroke="#222" /></S></button>
                <button aria-label="Maximize window"><S w={16} h={16}><rect x=".5" y=".5" width="15" height="15" stroke="#222" strokeWidth="1.300" /></S></button>
                <button aria-label="Close window"><Cross s={16} c="#333" k={1.1} /></button>
              </WinButtons>
            </WinTitle>
            <WinTabs><WinTab>Home</WinTab></WinTabs>
            <WinRibbon>
              <WinGroup $w={109}>
                <WinTools>
                  <WinTool $w={57}><BlueFolder />Open</WinTool>
                  <WinTool $w={50}><BlueDisk />Save</WinTool>
                </WinTools>
                <WinGroupTitle>File</WinGroupTitle>
              </WinGroup>
              <WinGroup $w={150}>
                <WinTools>
                  <WinTool $w={66}><GreenSheet /><span>Draw<br />Sheet</span></WinTool>
                  <WinTool $w={78}><GreenSheet /><span>Link<br />Selection</span></WinTool>
                </WinTools>
                <WinGroupTitle>Spreadsheet</WinGroupTitle>
              </WinGroup>
            </WinRibbon>
            <SheetArea>
              <Sheet>
                <colgroup><Col $w={41} />{cols.map((c, i) => <Col key={i} $w={c ? 102 : undefined} />)}</colgroup>
                <thead><tr><HeadCell />{cols.map((c, i) => <HeadCell key={i} scope="col" $hot={c === "F"}>{c}</HeadCell>)}</tr></thead>
                <tbody>
                  {Array.from({ length: 15 }, (_, r) => (
                    <tr key={r}>
                      <HeadCell scope="row" $hot={r === 1}>{r + 1}</HeadCell>
                      {cols.map((c, i) => <Cell key={i} $num={r > 0 && i > 0} $cursor={r === 1 && c === "F"}>{data[r]?.[i]}</Cell>)}
                    </tr>
                  ))}
                </tbody>
              </Sheet>
              <SheetScroll><SheetScrollButton aria-label="Scroll up"><Chev d="u" c="#444" s={2.5} /></SheetScrollButton><SheetThumb /><SheetScrollButton aria-label="Scroll down"><Chev d="d" c="#444" s={2.5} /></SheetScrollButton></SheetScroll>
            </SheetArea>
            <SheetFooter>
              <SheetNav>
                <button aria-label="First sheet"><S w={9} h={11}><path d="M0 0h2v11H0zM9 0v11L2 5.500z" fill="#111" /></S></button>
                <button aria-label="Previous sheet"><S w={7} h={11}><path d="M7 0v11L0 5.500z" fill="#111" /></S></button>
                <button aria-label="Next sheet"><S w={7} h={11}><path d="M0 0v11l7-5.500z" fill="#111" /></S></button>
                <button aria-label="Last sheet"><S w={9} h={11}><path d="M7 0h2v11H7zM0 0v11l7-5.500z" fill="#111" /></S></button>
              </SheetNav>
              <SheetTab><span>Sheet1</span></SheetTab>
              <FooterFill />
              <SheetHScroll><button aria-label="Scroll left"><Chev d="l" c="#444" s={2.5} /></button><span /><button aria-label="Scroll right"><Chev d="r" c="#444" s={2.5} /></button></SheetHScroll>
            </SheetFooter>
          </Window>
        </Frame>

        <Frame $x={735} $y={1348} $w={239} $h={98}>
          <Placed>
            <PlacedTable>
              <thead><tr>{data[0].map((h) => <th key={h} scope="col"><span>{h}</span></th>)}</tr></thead>
              <tbody>{data.slice(1).map((row) => <tr key={row[0]}>{row.map((v) => <td key={v}><span><b>{v}</b></span></td>)}</tr>)}</tbody>
            </PlacedTable>
          </Placed>
        </Frame>
      </Page>
    </>
  );
}
